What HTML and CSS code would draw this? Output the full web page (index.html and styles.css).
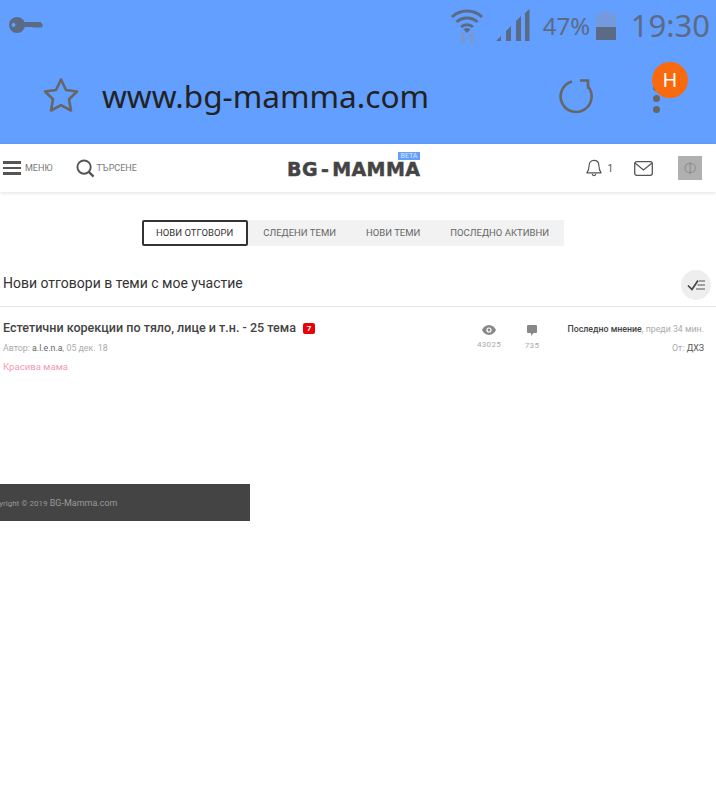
FILE: index.html
```html
<!DOCTYPE html>
<html lang="bg">
<head>
  <meta charset="UTF-8">
  <meta name="viewport" content="width=device-width, initial-scale=1.0">
  <title>BG-Mamma</title>
  <link rel="stylesheet" href="styles.css">
</head>
<body>
  <div class="browser">
    <div class="status-bar">
      <svg class="key-icon" width="34" height="17" viewBox="0 0 34 17">
        <circle cx="8" cy="8" r="8" fill="#5b6b85"/>
        <circle cx="4.500" cy="8" r="2" fill="#629fff"/>
        <path d="M14 5H31.500L34 8l-1.500 3-1.500-1-1 1-1.500-1-1 1-1.500-1-1 1-1.500-1H14z" fill="#5b6b85"/>
      </svg>
      <div class="status-right">
        <svg class="wifi-icon" width="34" height="35" viewBox="0 0 34 35">
          <path d="M2 9a22 22 0 0 1 30 0M6.500 14a15.500 15.500 0 0 1 21 0M11 19a9 9 0 0 1 12 0" fill="none" stroke="#5b6b85" stroke-width="3"/>
          <path d="M13.500 21.500a5 5 0 0 1 7 0L17 25z" fill="#5b6b85"/>
          <path d="M11.500 24h3v6H17l-4 5-4-5h2.500zM20.500 35h3v-6H26l-4-5-4 5h2.500z" fill="#7c98c8"/>
        </svg>
        <svg class="signal-icon" width="34" height="33" viewBox="0 0 34 33">
          <path d="M0 32l5-5v5zM10 32V22l5-5v15zM20 32V12l5-5v25zM29 32V4l4.500-4v32z" fill="#5b6b85"/>
        </svg>
        <span class="battery-text">47%</span>
        <div class="battery"><div class="battery-fill"></div></div>
        <span class="clock">19:30</span>
      </div>
    </div>
    <div class="url-bar">
      <svg class="star-icon" width="36" height="36" viewBox="0 0 36 36">
        <path d="M18 2.500l5 10.500 11 1.500-8 7.800 2 11.200-10-5.400-10 5.400 2-11.200-8-7.800 11-1.500z" fill="none" stroke="#666" stroke-width="2.600" stroke-linejoin="round"/>
      </svg>
      <span class="url">www.bg-mamma.com</span>
      <svg class="reload-icon" width="36" height="38" viewBox="0 0 36 38">
        <path d="M14 3.500A15.500 15.500 0 1 0 30 8.500" fill="none" stroke="#666" stroke-width="2.600"/>
        <path d="M22 2.500H30V10.500" fill="none" stroke="#666" stroke-width="2.600"/>
      </svg>
      <div class="menu-dots"><i></i><i></i><i></i></div>
      <div class="avatar">H</div>
    </div>
  </div>

  <header class="site-header">
    <div class="header-left">
      <a class="nav-link">
        <span class="burger"><i></i><i></i><i></i></span>
        <span>МЕНЮ</span>
      </a>
      <a class="nav-link search-link">
        <svg width="19" height="19" viewBox="0 0 20 20">
          <circle cx="8.500" cy="8.500" r="7" fill="none" stroke="#555" stroke-width="2"/>
          <path d="M13.500 13.500l5 5" stroke="#555" stroke-width="2.400"/>
        </svg>
        <span>ТЪРСЕНЕ</span>
      </a>
    </div>
    <div class="logo">
      <span class="logo-text">BG<span class="logo-dash">-</span>MAMMA</span>
      <span class="beta">BETA</span>
    </div>
    <div class="header-right">
      <svg class="bell" width="16" height="20" viewBox="0 0 18 20">
        <path d="M9 1.500c3.500 0 5.500 2.500 5.500 6 0 4 .8 5.500 2.500 8H1c1.700-2.500 2.500-4 2.500-8 0-3.500 2-6 5.500-6z" fill="none" stroke="#555" stroke-width="1.300" stroke-linejoin="round"/>
        <path d="M7 16.500a2 2 0 0 0 4 0" fill="none" stroke="#555" stroke-width="1.300"/>
      </svg>
      <span class="bell-count">1</span>
      <svg class="mail" width="19" height="15" viewBox="0 0 19 15">
        <rect x=".7" y=".7" width="17.600" height="13.600" rx="2" fill="none" stroke="#555" stroke-width="1.300"/>
        <path d="M1 2l8.500 7L18 2" fill="none" stroke="#555" stroke-width="1.300"/>
      </svg>
      <div class="user-pic">Ф</div>
    </div>
  </header>

  <nav class="tabs">
    <a class="tab active">НОВИ ОТГОВОРИ</a>
    <a class="tab">СЛЕДЕНИ ТЕМИ</a>
    <a class="tab">НОВИ ТЕМИ</a>
    <a class="tab">ПОСЛЕДНО АКТИВНИ</a>
  </nav>

  <div class="section-head">
    <h2>Нови отговори в теми с мое участие</h2>
    <div class="mark-read">
      <svg width="19" height="12" viewBox="0 0 19 12">
        <path d="M1 6.500L5 10.500 11 1.500" fill="none" stroke="#444" stroke-width="1.700"/>
        <path d="M12 2h6M10.500 6h7.500M9 10h9" stroke="#555" stroke-width="1.200"/>
      </svg>
    </div>
  </div>

  <div class="topic">
    <div class="topic-main">
      <div class="topic-title">Естетични корекции по тяло, лице и т.н. - 25 тема <span class="new-count">7</span></div>
      <div class="topic-meta">Автор: <b>a.l.e.n.a</b>, 05 дек. 18</div>
      <div class="topic-cat">Красива мама</div>
    </div>
    <div class="stat stat-views">
      <svg width="14" height="10" viewBox="0 0 14 10">
        <path d="M7 0c3.200 0 5.700 2.200 7 5-1.300 2.800-3.800 5-7 5S1.300 7.800 0 5c1.300-2.800 3.800-5 7-5z" fill="#888"/>
        <circle cx="7" cy="5" r="2.600" fill="#fff"/>
        <circle cx="7" cy="5" r="1.400" fill="#888"/>
      </svg>
      <span>43025</span>
    </div>
    <div class="stat stat-replies">
      <svg width="10" height="11" viewBox="0 0 10 11">
        <path d="M1 0h8a1 1 0 0 1 1 1v6a1 1 0 0 1-1 1H6.500L4 11V8H1a1 1 0 0 1-1-1V1a1 1 0 0 1 1-1z" fill="#888"/>
      </svg>
      <span>735</span>
    </div>
    <div class="last-post">
      <div><b>Последно мнение</b>, преди 34 мин.</div>
      <div class="last-by">От: <em>ДХЗ</em></div>
    </div>
  </div>

  <footer class="site-footer">
    <span><small>Copyright © 2019</small> BG-Mamma.com</span>
  </footer>
</body>
</html>
```

FILE: styles.css
```css
body {
  margin: 0;
  background: #fff;
  font-family: Roboto, sans-serif;
  color: #444;
  overflow: hidden;
}

/* phone chrome on top */
.browser {
  background: #629fff;
  height: 144px;
}
.status-bar {
  display: flex;
  justify-content: space-between;
  align-items: flex-start;
  height: 52px;
  padding: 8px 6px 0 9px;
  box-sizing: border-box;
}
.key-icon {
  margin-top: 9px;
}
.status-right {
  display: flex;
  align-items: center;
  color: #5b6b85;
  font-family: "Noto Sans", sans-serif;
  line-height: 1;
}
.signal-icon {
  margin-left: 12px;
}
.battery-text {
  font-size: 24px;
  margin-left: 13px;
  width: 47px;
}
.battery {
  width: 20px;
  height: 26px;
  margin-left: 6px;
  margin-top: 3px;
  background: #7499dc;
  position: relative;
}
.battery::before {
  content: "";
  position: absolute;
  left: 6px;
  top: -3px;
  width: 8px;
  height: 3px;
  background: #7499dc;
}
.battery-fill {
  position: absolute;
  left: 0;
  right: 0;
  bottom: 0;
  height: 13px;
  background: #5b6b85;
}
.clock {
  font-size: 31px;
  margin-left: 15px;
}

.url-bar {
  position: relative;
  display: flex;
  align-items: center;
  height: 92px;
  padding: 0 0 6px 43px;
  box-sizing: border-box;
}
.url {
  font-family: "Noto Sans", sans-serif;
  font-size: 31.6px;
  color: #222;
  margin-left: 23px;
  width: 456px;
}
.reload-icon {
  margin-top: 3px;
}
.menu-dots {
  margin-left: 59px;
  margin-top: 6px;
  display: flex;
  flex-direction: column;
  gap: 4px;
}
.menu-dots i {
  display: block;
  width: 7px;
  height: 7px;
  border-radius: 50%;
  background: #666;
}
.avatar {
  position: absolute;
  left: 652px;
  top: 10px;
  width: 36px;
  height: 36px;
  border-radius: 50%;
  background: #f96a0e;
  color: #fff;
  font-family: "Noto Sans", sans-serif;
  font-size: 20px;
  line-height: 36px;
  text-align: center;
}

/* site header */
.site-header {
  display: flex;
  align-items: center;
  justify-content: space-between;
  position: relative;
  height: 48px;
  padding: 0 14px 0 3px;
  box-sizing: border-box;
  box-shadow: 0 1px 4px rgba(0, 0, 0, .12);
}
.header-left {
  display: flex;
  align-items: center;
}
.nav-link {
  display: flex;
  align-items: center;
  gap: 4px;
  font-size: 9px;
  color: #777;
}
.search-link {
  margin-left: 24px;
  gap: 1px;
}
.burger {
  display: flex;
  flex-direction: column;
  gap: 3px;
  width: 18px;
}
.burger i {
  display: block;
  height: 2.500px;
  background: #555;
}
.logo {
  position: absolute;
  left: 287px;
  top: 8px;
  width: 133px;
  height: 30px;
}
.logo-text {
  position: absolute;
  left: 0;
  top: 9px;
  font-family: "DejaVu Sans", sans-serif;
  font-weight: bold;
  font-size: 19px;
  line-height: 16px;
  color: #444;
  white-space: nowrap;
  letter-spacing: .4px;
  -webkit-text-stroke: .5px #444;
}
.logo-dash {
  margin: 0 3px;
}
.beta {
  position: absolute;
  right: 0;
  top: 0;
  width: 22px;
  height: 8px;
  background: #629fff;
  color: #dce9ff;
  font-size: 7px;
  line-height: 8px;
  text-align: center;
}
.header-right {
  display: flex;
  align-items: center;
}
.bell-count {
  font-size: 10px;
  color: #555;
  margin-left: 5px;
}
.mail {
  margin-left: 21px;
}
.user-pic {
  margin-left: 25px;
  width: 24px;
  height: 24px;
  background: #b0b0b0;
  color: #8c8c8c;
  font-size: 17px;
  font-weight: 300;
  line-height: 24px;
  text-align: center;
}

/* tabs */
.tabs {
  display: flex;
  justify-content: center;
  margin-top: 28px;
  padding-right: 10px;
}
.tab {
  background: #f2f2f2;
  color: #666;
  font-size: 9.5px;
  line-height: 26px;
  height: 26px;
  padding: 0 15px;
}
.tab.active {
  background: #fff;
  color: #333;
  border: 2px solid #333;
  border-radius: 2px;
  line-height: 22px;
  height: 22px;
  padding: 0 13px 0 12px;
}

.section-head {
  display: flex;
  justify-content: space-between;
  align-items: center;
  height: 61px;
  padding: 18px 5px 0 3px;
  box-sizing: border-box;
  border-bottom: 1px solid #e6e6e6;
}
.section-head h2 {
  margin: 0 0 5px;
  font-size: 14px;
  font-weight: 400;
  color: #333;
}
.mark-read {
  display: flex;
  align-items: center;
  justify-content: center;
  width: 30px;
  height: 30px;
  border-radius: 50%;
  background: #eee;
}

.topic {
  display: flex;
  padding: 14px 12px 0 3px;
}
.topic-main {
  width: 460px;
}
.topic-title {
  font-size: 12.55px;
  font-weight: 500;
  color: #444;
  line-height: 14px;
}
.new-count {
  display: inline-block;
  margin-left: 4px;
  width: 12px;
  height: 11px;
  border-radius: 2px;
  background: #e8000b;
  color: #fff;
  font-size: 8px;
  font-weight: 700;
  line-height: 11px;
  text-align: center;
  vertical-align: 1px;
}
.topic-meta {
  margin-top: 7px;
  font-size: 8.8px;
  line-height: 12px;
  color: #aaa;
}
.topic-meta b {
  font-weight: 400;
  color: #666;
}
.topic-cat {
  margin-top: 7px;
  font-size: 9.6px;
  line-height: 12px;
  color: #f29cb0;
}
.stat {
  display: flex;
  flex-direction: column;
  align-items: center;
  gap: 5px;
  width: 30px;
  padding-top: 4px;
  font-size: 8px;
  color: #aaa;
  letter-spacing: .3px;
}
.stat-views {
  margin-left: 11px;
}
.stat-replies {
  margin-left: 13px;
}
.last-post {
  margin-left: auto;
  padding-top: 2px;
  text-align: right;
  font-size: 8.8px;
  color: #aaa;
  line-height: 12px;
}
.last-post b {
  font-weight: 500;
  color: #444;
}
.last-by {
  margin-top: 7px;
}
.last-by em {
  font-style: normal;
  color: #555;
}

.site-footer {
  position: absolute;
  left: 0;
  top: 484px;
  width: 250px;
  height: 37px;
  background: #444;
  overflow: hidden;
  color: #999;
  font-size: 9px;
  line-height: 38px;
  white-space: nowrap;
}
.site-footer span {
  display: block;
  margin-left: -15px;
}
.site-footer small {
  font-size: 8px;
}
```
